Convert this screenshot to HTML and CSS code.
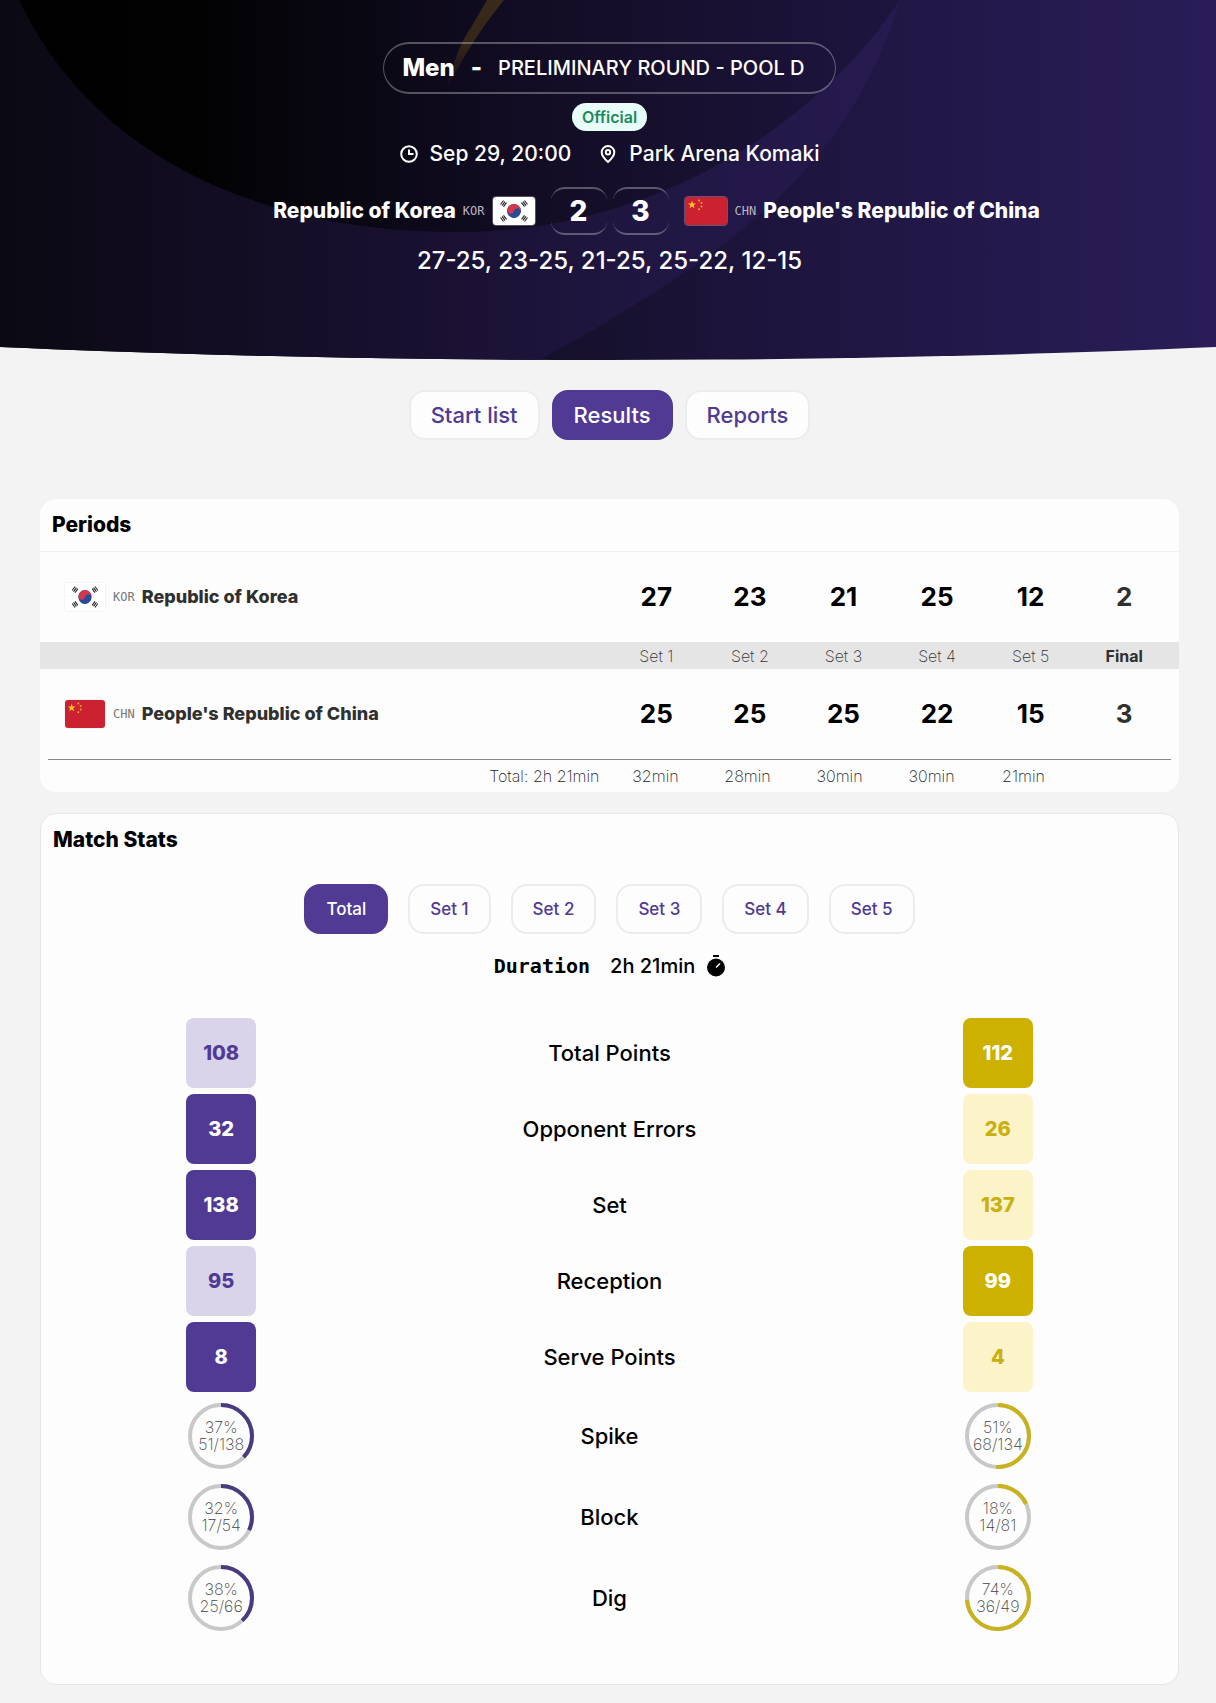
FILE: index.html
```html
<!DOCTYPE html>
<html lang="en">
  <head>
    <meta charset="UTF-8" />
    <meta name="viewport" content="width=device-width, initial-scale=1.0" />
    <title>Republic of Korea - People's Republic of China</title>
    <link rel="stylesheet" href="styles.css">
  </head>
  <body>
    <svg width="0" height="0" class="sprite" aria-hidden="true">
      <symbol id="flag-kor" viewBox="0 0 42 28" preserveAspectRatio="none">
        <rect width="42" height="28" fill="#fff" />
        <g transform="rotate(15 21 14)">
          <circle cx="21" cy="14" r="7" fill="#2a4a9a" />
          <path d="M14 14a7 7 0 0 1 14 0a3.5 3.5 0 0 0-7 0a3.5 3.5 0 0 1-7 0z" fill="#d2384b" />
        </g>
        <g stroke="#222" stroke-width="1.1">
          <path d="M7.5 7.5l3-4M9 8.6l3-4M10.5 9.7l3-4" />
          <path d="M34.5 7.5l-3-4M33 8.6l-3-4M31.5 9.7l-3-4" />
          <path d="M7.5 20.5l3 4M9 19.4l3 4M10.5 18.3l3 4" />
          <path d="M34.5 20.5l-3 4M33 19.4l-3 4M31.5 18.3l-3 4" />
        </g>
      </symbol>
      <symbol id="flag-chn" viewBox="0 0 42 28" preserveAspectRatio="none">
        <rect width="42" height="28" fill="#cc2131" />
        <path d="M7 3.6l1 2.9h3.1l-2.5 1.8 1 3L7 9.5l-2.6 1.8 1-3-2.5-1.8H6z" fill="#fbc62f" />
        <g fill="#f0a43a">
          <circle cx="14" cy="3.5" r="1" />
          <circle cx="16.5" cy="6" r="1" />
          <circle cx="16.5" cy="9.6" r="1" />
          <circle cx="14" cy="12.2" r="1" />
        </g>
      </symbol>
    </svg>

    <header class="hero">
      <svg class="hero-bg" viewBox="0 0 1216 360" preserveAspectRatio="none" aria-hidden="true">
        <defs>
          <linearGradient id="bandFill" x1="0" y1="0" x2="1" y2="0">
            <stop offset="0" stop-color="#0b0913" />
            <stop offset="0.5" stop-color="#1a1133" />
            <stop offset="0.75" stop-color="#211744" />
            <stop offset="1" stop-color="#271a50" />
          </linearGradient>
          <linearGradient id="discFill" x1="0" y1="0" x2="1" y2="0">
            <stop offset="0" stop-color="#000" />
            <stop offset="0.2" stop-color="#020203" />
            <stop offset="0.55" stop-color="#110c22" />
            <stop offset="1" stop-color="#1e153f" />
          </linearGradient>
          <linearGradient id="goldFill" x1="0" y1="0" x2="0" y2="1">
            <stop offset="0" stop-color="#3a2a1a" />
            <stop offset="0.5" stop-color="#33251b" />
            <stop offset="1" stop-color="#33251b" stop-opacity="0" />
          </linearGradient>
        </defs>
        <path d="M0 0H900C850 170 720 260 540 360H0z" fill="url(#bandFill)" />
        <path d="M19 0C90 150 250 232 457 232C660 232 820 120 900 0z" fill="url(#discFill)" />
        <path d="M487 0H504Q468 44 446 92Q456 48 472 26Z" fill="url(#goldFill)" />
      </svg>

      <div class="round">
        <strong>Men</strong>
        <strong>-</strong>
        <span>PRELIMINARY ROUND - POOL D</span>
      </div>
      <span class="badge">Official</span>

      <div class="info">
        <span class="info-item">
          <svg width="18" height="18" viewBox="0 0 18 18" fill="none" stroke="#fff" stroke-width="2" aria-hidden="true">
            <circle cx="9" cy="9" r="7.8" />
            <path d="M9 4.5V9h4.5" />
          </svg>
          Sep 29, 20:00
        </span>
        <span class="info-item">
          <svg width="18" height="18" viewBox="0 0 18 18" fill="none" stroke="#fff" stroke-width="2" aria-hidden="true">
            <path d="M9 17C5 13.500 2.700 10.500 2.700 7.300a6.300 6.300 0 0 1 12.600 0C15.300 10.500 13 13.500 9 17z" />
            <circle cx="9" cy="7.300" r="2.200" />
          </svg>
          Park Arena Komaki
        </span>
      </div>

      <div class="teams">
        <div class="team home">
          <strong>Republic of Korea</strong>
          <span class="code">KOR</span>
          <svg class="flag"><use href="#flag-kor" /></svg>
        </div>
        <div class="score">
          <span>2</span>
          <span>3</span>
        </div>
        <div class="team">
          <svg class="flag"><use href="#flag-chn" /></svg>
          <span class="code">CHN</span>
          <strong>People's Republic of China</strong>
        </div>
      </div>
      <p class="sets">27-25, 23-25, 21-25, 25-22, 12-15</p>
    </header>

    <nav class="tabs">
      <button class="btn">Start list</button>
      <button class="btn active">Results</button>
      <button class="btn">Reports</button>
    </nav>

    <main>
      <section class="card periods">
        <h2>Periods</h2>
        <table>
          <colgroup>
            <col class="col-team">
            <col span="6">
          </colgroup>
          <tbody>
            <tr>
              <th scope="row">
                <div class="team">
                  <svg class="flag"><use href="#flag-kor" /></svg>
                  <span class="code">KOR</span>
                  <span>Republic of Korea</span>
                </div>
              </th>
              <td>27</td>
              <td>23</td>
              <td>21</td>
              <td>25</td>
              <td>12</td>
              <td class="final">2</td>
            </tr>
            <tr class="labels">
              <td></td>
              <th scope="col">Set 1</th>
              <th scope="col">Set 2</th>
              <th scope="col">Set 3</th>
              <th scope="col">Set 4</th>
              <th scope="col">Set 5</th>
              <th scope="col" class="final">Final</th>
            </tr>
            <tr>
              <th scope="row">
                <div class="team">
                  <svg class="flag"><use href="#flag-chn" /></svg>
                  <span class="code">CHN</span>
                  <span>People's Republic of China</span>
                </div>
              </th>
              <td>25</td>
              <td>25</td>
              <td>25</td>
              <td>22</td>
              <td>15</td>
              <td class="final">3</td>
            </tr>
          </tbody>
        </table>
        <div class="durations">
          <span class="total">Total: 2h 21min</span>
          <span>32min</span>
          <span>28min</span>
          <span>30min</span>
          <span>30min</span>
          <span>21min</span>
        </div>
      </section>

      <section class="card stats">
        <h2>Match Stats</h2>
        <div class="set-tabs">
          <button class="btn active">Total</button>
          <button class="btn">Set 1</button>
          <button class="btn">Set 2</button>
          <button class="btn">Set 3</button>
          <button class="btn">Set 4</button>
          <button class="btn">Set 5</button>
        </div>

        <div class="duration">
          <strong>Duration</strong>
          <span>2h 21min</span>
          <svg width="18" height="22" viewBox="0 0 18 22" aria-hidden="true">
            <rect x="6" y="0" width="6" height="2" />
            <circle cx="9" cy="12.500" r="9" />
            <path d="M9 12.500l4-4" stroke="#fff" stroke-width="1.500" />
          </svg>
        </div>

        <div class="stat-list">
          <div class="stat">
            <span class="box home">108</span>
            <span>Total Points</span>
            <span class="box away lead">112</span>
          </div>
          <div class="stat">
            <span class="box home lead">32</span>
            <span>Opponent Errors</span>
            <span class="box away">26</span>
          </div>
          <div class="stat">
            <span class="box home lead">138</span>
            <span>Set</span>
            <span class="box away">137</span>
          </div>
          <div class="stat">
            <span class="box home">95</span>
            <span>Reception</span>
            <span class="box away lead">99</span>
          </div>
          <div class="stat">
            <span class="box home lead">8</span>
            <span>Serve Points</span>
            <span class="box away">4</span>
          </div>
        </div>

        <div class="ring-list">
          <div class="stat">
            <div class="ring home">
              <svg viewBox="0 0 66 66">
                <circle cx="33" cy="33" r="31" />
                <circle class="arc" cx="33" cy="33" r="31" pathLength="100" stroke-dasharray="37 100" />
              </svg>
              <span>37%<br>51/138</span>
            </div>
            <span>Spike</span>
            <div class="ring away">
              <svg viewBox="0 0 66 66">
                <circle cx="33" cy="33" r="31" />
                <circle class="arc" cx="33" cy="33" r="31" pathLength="100" stroke-dasharray="51 100" />
              </svg>
              <span>51%<br>68/134</span>
            </div>
          </div>
          <div class="stat">
            <div class="ring home">
              <svg viewBox="0 0 66 66">
                <circle cx="33" cy="33" r="31" />
                <circle class="arc" cx="33" cy="33" r="31" pathLength="100" stroke-dasharray="32 100" />
              </svg>
              <span>32%<br>17/54</span>
            </div>
            <span>Block</span>
            <div class="ring away">
              <svg viewBox="0 0 66 66">
                <circle cx="33" cy="33" r="31" />
                <circle class="arc" cx="33" cy="33" r="31" pathLength="100" stroke-dasharray="18 100" />
              </svg>
              <span>18%<br>14/81</span>
            </div>
          </div>
          <div class="stat">
            <div class="ring home">
              <svg viewBox="0 0 66 66">
                <circle cx="33" cy="33" r="31" />
                <circle class="arc" cx="33" cy="33" r="31" pathLength="100" stroke-dasharray="38 100" />
              </svg>
              <span>38%<br>25/66</span>
            </div>
            <span>Dig</span>
            <div class="ring away">
              <svg viewBox="0 0 66 66">
                <circle cx="33" cy="33" r="31" />
                <circle class="arc" cx="33" cy="33" r="31" pathLength="100" stroke-dasharray="74 100" />
              </svg>
              <span>74%<br>36/49</span>
            </div>
          </div>
        </div>
      </section>
    </main>
  </body>
</html>
```
FILE: styles.css
```css
* {
  margin: 0;
  padding: 0;
  box-sizing: border-box;
}

body {
  font-family: Inter, "Liberation Sans", sans-serif;
  font-size: 20px;
  line-height: 24px;
  color: #000;
  background: #f3f3f3;
}

button {
  font-family: inherit;
  cursor: pointer;
}

.sprite {
  position: absolute;
}

/* Hero */
.hero {
  position: relative;
  display: flex;
  flex-direction: column;
  align-items: center;
  padding: 42px 37px 85px 40px;
  background: linear-gradient(90deg, #0b0913 0%, #15102a 45%, #1e153f 65%, #2a1d58 100%);
  clip-path: ellipse(188% 100% at 50% 0);
  color: #fff;
}

.hero > * {
  position: relative;
}

.hero .hero-bg {
  position: absolute;
  inset: 0;
  width: 100%;
  height: 100%;
}

.round {
  display: flex;
  align-items: center;
  gap: 16px;
  height: 52px;
  padding: 0 30px 0 18px;
  border: solid rgba(255, 255, 255, 0.3);
  border-width: 2px 1px;
  border-radius: 26px;
  font-weight: 500;
}

.round strong {
  font-size: 24px;
  font-weight: 800;
}

.badge {
  margin-top: 9px;
  padding: 0 10px;
  border-radius: 14px;
  background: #e8fdf8;
  color: #1c8a5c;
  font-size: 16px;
  font-weight: 600;
  line-height: 28px;
}

.info {
  display: flex;
  gap: 28px;
  margin-top: 11px;
  font-size: 21px;
  font-weight: 500;
}

.info-item {
  display: flex;
  align-items: center;
  gap: 12px;
}

.teams {
  display: grid;
  grid-template-columns: 1fr auto 1fr;
  align-items: center;
  gap: 15px;
  width: 100%;
  margin-top: 21px;
}

.team {
  display: flex;
  align-items: center;
  gap: 7px;
}

.team.home {
  justify-content: flex-end;
}

.team strong {
  font-size: 21px;
  font-weight: 800;
}

.code {
  color: #b9b6c4;
  font-family: "DejaVu Sans Mono", monospace;
  font-size: 12px;
  font-weight: 400;
}

.flag {
  width: 44px;
  height: 30px;
  border: 1px solid rgba(190, 180, 200, 0.4);
  border-radius: 4px;
}

.score {
  display: flex;
  gap: 6px;
}

.score span {
  width: 56px;
  border: solid rgba(255, 255, 255, 0.3);
  border-width: 2px 0;
  border-radius: 14px;
  font-size: 28px;
  font-weight: 800;
  line-height: 44px;
  text-align: center;
}

.sets {
  margin-top: 12px;
  font-size: 24px;
  font-weight: 500;
  line-height: 28px;
}

/* Tabs */
.tabs,
.set-tabs {
  display: flex;
  justify-content: center;
}

.tabs {
  gap: 12px;
  padding: 30px 37px 59px 40px;
}

.btn {
  height: 50px;
  padding: 0 20px;
  border: 2px solid #ececec;
  border-radius: 16px;
  background: #fdfdfd;
  color: #503a93;
  font-size: 22px;
  font-weight: 500;
}

.btn.active {
  border-color: #503a93;
  background: #503a93;
  color: #fff;
}

.set-tabs {
  gap: 20px;
}

.set-tabs .btn {
  font-size: 17px;
}

/* Cards */
main {
  padding: 0 37px 18px 40px;
}

.card {
  border-radius: 16px;
  background: #fdfdfd;
}

h2 {
  font-size: 21px;
  font-weight: 800;
  line-height: 24px;
}

.periods {
  overflow: hidden;
}

.periods h2 {
  padding: 14px 12px;
  border-bottom: 1px solid #f0f0f0;
}

.periods table {
  width: calc(100% - 16px);
  margin: 0 8px;
  table-layout: fixed;
  border-collapse: collapse;
}

.col-team {
  width: 50%;
}

.periods td {
  height: 90px;
  font-size: 26px;
  font-weight: 700;
  text-align: center;
}

.periods .team {
  padding-left: 16px;
  color: #303030;
  font-size: 18px;
  font-weight: 800;
}

.periods .code {
  color: #777;
}

.periods .flag {
  width: 42px;
  border-color: #f4f4f4;
}

.labels {
  background: #e5e5e5;
  box-shadow: -8px 0 #e5e5e5, 8px 0 #e5e5e5;
}

.labels td,
.labels th {
  height: 27px;
  color: #333;
  font-size: 16px;
  font-weight: 200;
  line-height: 20px;
}

.periods .final {
  color: #303030;
  font-weight: 700;
}

.durations {
  display: flex;
  margin: 0 8px;
  border-top: 1px solid #888;
  color: #222;
  font-size: 16px;
  font-weight: 200;
  line-height: 32px;
}

.durations span {
  width: 92px;
  text-align: center;
}

.durations .total {
  width: 50%;
  padding-right: 10px;
  text-align: right;
}

/* Match stats */
.stats {
  margin-top: 21px;
  padding: 14px 0 53px;
  border: 1px solid #e6e6e6;
}

.stats h2 {
  padding: 0 12px;
}

.set-tabs {
  margin-top: 32px;
}

.duration {
  display: flex;
  justify-content: center;
  align-items: center;
  margin-top: 20px;
  font-weight: 500;
}

.duration strong {
  margin-right: 20px;
  font-family: "DejaVu Sans Mono", monospace;
}

.duration svg {
  margin-left: 12px;
}

.stat-list {
  display: grid;
  gap: 6px;
  margin-top: 40px;
}

.stat {
  display: grid;
  grid-template-columns: repeat(3, 1fr);
  gap: 28px;
  align-items: center;
  justify-items: center;
  font-size: 22px;
  font-weight: 500;
}

.box {
  width: 70px;
  border-radius: 8px;
  font-size: 20px;
  font-weight: 800;
  line-height: 70px;
  text-align: center;
}

.box.home {
  background: #d9d4ea;
  color: #503a93;
}

.box.home.lead {
  background: #503a93;
  color: #fff;
}

.box.away {
  background: #fdf3c8;
  color: #c9af10;
}

.box.away.lead {
  background: #cdb100;
  color: #fff;
}

.ring-list {
  display: grid;
  gap: 15px;
  margin-top: 11px;
}

.ring {
  display: grid;
  place-items: center;
  width: 66px;
  height: 66px;
}

.ring svg,
.ring span {
  grid-area: 1 / 1;
}

.ring svg {
  width: 66px;
  height: 66px;
  fill: none;
  stroke: #c8c8c8;
  stroke-width: 4;
}

.ring .arc {
  transform: rotate(-90deg);
  transform-origin: center;
}

.ring.home .arc {
  stroke: #4a3a80;
}

.ring.away .arc {
  stroke: #c9b21c;
}

.ring span {
  color: #444;
  font-size: 16px;
  font-weight: 200;
  line-height: 17px;
  text-align: center;
}
```
